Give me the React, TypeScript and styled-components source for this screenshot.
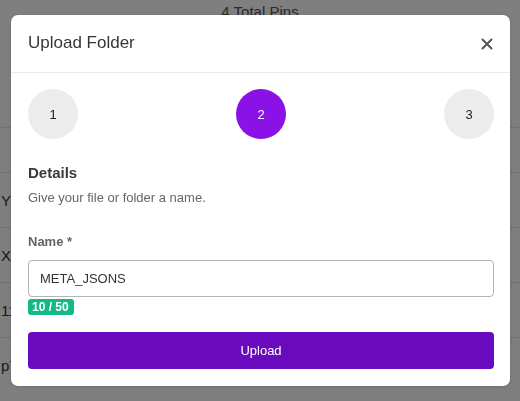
import React from "react";
import styled, { createGlobalStyle } from "styled-components";

const Global = createGlobalStyle`
  html, body { margin: 0; padding: 0; background: #fff; }
  body { font-family: "Liberation Sans", Arial, sans-serif; }
  * { box-sizing: border-box; }
`;

const Page = styled.div`
  width: 520px;
  height: 401px;
  overflow: hidden;
  background: #fff;
`;

const PageTitle = styled.div`
  text-align: center;
  font-size: 15px;
  color: #555;
  height: 28px;
  line-height: 24px;
`;

const Table = styled.div`
  display: flex;
  flex-direction: column;
  margin-top: 99px;
`;

const Row = styled.div<{ $short?: boolean }>`
  height: ${(p) => (p.$short ? "45px" : "55px")};
  flex-shrink: 0;
  border-top: 1px solid #e4e4e4;
  display: flex;
  align-items: center;
  padding-left: 1px;
  font-size: 15px;
  color: #333;
`;

const Overlay = styled.div`
  position: fixed;
  inset: 0;
  background: rgba(0, 0, 0, 0.5);
`;

const Modal = styled.div`
  position: fixed;
  left: 11px;
  top: 15px;
  width: 499px;
  background: #fff;
  border-radius: 7px;
  box-shadow: 0 1px 4px rgba(0, 0, 0, 0.15);
`;

const Header = styled.div`
  height: 58px;
  display: flex;
  align-items: center;
  justify-content: space-between;
  padding: 0 17px 0 17px;
  border-bottom: 1px solid #ebebeb;
`;

const Title = styled.div`
  font-size: 17px;
  font-weight: 500;
  color: #363636;
  margin-top: -1px;
`;

const Close = styled.button`
  border: 0;
  background: none;
  padding: 0;
  width: 12px;
  height: 12px;
  display: flex;
  cursor: pointer;
`;

const Body = styled.div`
  padding: 16px 16px 17px 17px;
`;

const Steps = styled.div`
  display: flex;
  justify-content: space-between;
`;

const Step = styled.div<{ $active?: boolean }>`
  width: 50px;
  height: 50px;
  border-radius: 50%;
  display: flex;
  align-items: center;
  justify-content: center;
  font-size: 13px;
  background: ${(p) => (p.$active ? "#8a12e6" : "#ececec")};
  color: ${(p) => (p.$active ? "#fff" : "#222")};
`;

const Section = styled.div`
  margin-top: 25px;
`;

const Heading = styled.div`
  font-size: 15px;
  font-weight: 700;
  color: #3a3a3a;
  line-height: 18px;
`;

const Hint = styled.div`
  font-size: 13px;
  color: #666;
  margin-top: 8px;
  line-height: 16px;
`;

const Label = styled.div`
  font-size: 13px;
  font-weight: 700;
  color: #636363;
  margin-top: 28px;
  line-height: 16px;
`;

const Input = styled.input`
  display: block;
  width: 466px;
  height: 37px;
  margin-top: 10px;
  border: 1px solid #b4b4b4;
  border-radius: 4px;
  padding: 0 11px;
  font-family: "Liberation Sans", Arial, sans-serif;
  font-size: 13px;
  color: #333;
  outline: none;
`;

const Counter = styled.span`
  display: inline-block;
  margin-top: 2px;
  background: #12b886;
  color: #fff;
  font-size: 12px;
  font-weight: 700;
  line-height: 16px;
  padding: 0 5px 0 4px;
  border-radius: 3px;
`;

const Submit = styled.button`
  display: block;
  width: 466px;
  height: 37px;
  margin-top: 17px;
  border: 0;
  border-radius: 4px;
  background: #6a0abf;
  color: #fff;
  font-family: "Liberation Sans", Arial, sans-serif;
  font-size: 13px;
  cursor: pointer;
`;

export default function App() {
  return (
    <Page>
      <Global />
      <PageTitle>4 Total Pins</PageTitle>
      <Table>
        <Row $short />
        <Row>Yc</Row>
        <Row>Xc</Row>
        <Row>11</Row>
        <Row>p7</Row>
      </Table>
      <Overlay />
      <Modal>
        <Header>
          <Title>Upload Folder</Title>
          <Close aria-label="Close">
            <svg width="12" height="12" viewBox="0 0 12 12">
              <path d="M1.5 1.5 L10.5 10.5 M10.5 1.5 L1.5 10.5" stroke="#555" strokeWidth="2" strokeLinecap="round" />
            </svg>
          </Close>
        </Header>
        <Body>
          <Steps>
            <Step>1</Step>
            <Step $active>2</Step>
            <Step>3</Step>
          </Steps>
          <Section>
            <Heading>Details</Heading>
            <Hint>Give your file or folder a name.</Hint>
            <Label>Name *</Label>
            <Input defaultValue="META_JSONS" />
            <Counter>10 / 50</Counter>
            <Submit>Upload</Submit>
          </Section>
        </Body>
      </Modal>
    </Page>
  );
}
